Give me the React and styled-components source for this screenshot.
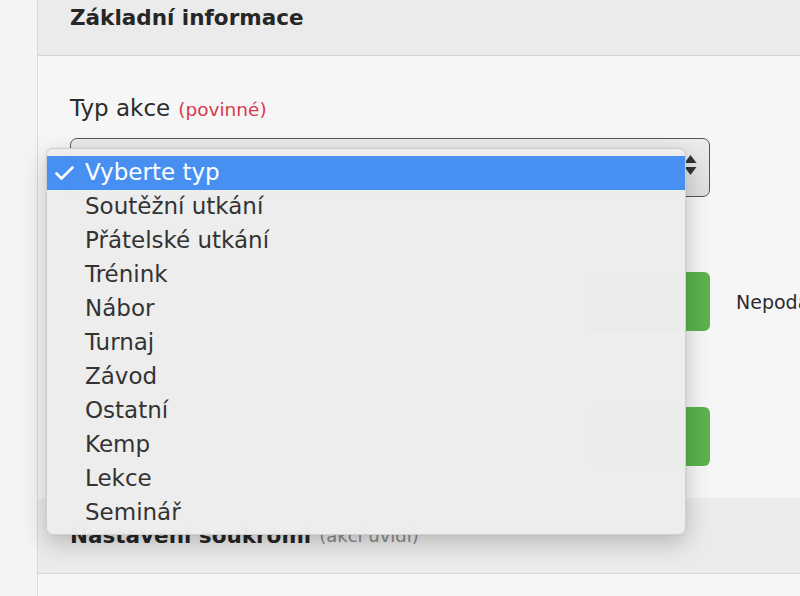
import React from 'react';
import styled, { createGlobalStyle } from 'styled-components';

const GlobalStyle = createGlobalStyle`
  html, body {
    margin: 0;
    padding: 0;
    overflow: hidden;
    background: #f4f4f4;
    font-family: "DejaVu Sans", "Liberation Sans", sans-serif;
  }
`;

const Page = styled.div`
  position: relative;
  display: flex;
  width: 800px;
  height: 596px;
  overflow: hidden;
  background: #f4f4f4;
`;

const Gutter = styled.div`
  width: 37px;
  flex-shrink: 0;
  border-right: 1px solid #d9d9d9;
`;

const Card = styled.div`
  flex: 1;
  display: flex;
  flex-direction: column;
  min-width: 0;
`;

const SectionHeader = styled.div`
  display: flex;
  align-items: ${(p) => (p.$top ? 'flex-start' : 'center')};
  height: ${(p) => p.$height}px;
  padding: ${(p) => (p.$top ? '5px' : '0')} 32px 0;
  box-sizing: border-box;
  background: #ebebeb;
  border-bottom: 1px solid #d5d5d5;
  white-space: nowrap;
`;

const HeaderTitle = styled.span`
  font-size: 21.5px;
  line-height: 26px;
  font-weight: bold;
  color: #262626;
`;

const HeaderNote = styled.span`
  font-size: 18px;
  color: #8a8a8a;
  margin-left: 8px;
`;

const Body = styled.div`
  background: #f6f6f6;
  padding: ${(p) => p.$padding};
  display: flex;
  flex-direction: column;
  flex: ${(p) => (p.$grow ? 1 : 'none')};
`;

const Label = styled.div`
  font-size: 23px;
  line-height: 26px;
  color: #2b2b2b;
  margin-bottom: 15px;
`;

const Required = styled.span`
  font-size: 18.5px;
  color: #d9394f;
  margin-left: 8px;
`;

const SelectBox = styled.div`
  position: relative;
  width: 640px;
  height: 59px;
  box-sizing: border-box;
  border: 1.5px solid #555;
  border-radius: 7px;
  background: linear-gradient(#ececec, #dedede);
`;

const Arrows = styled.svg`
  position: absolute;
  right: 12px;
  top: 16px;
`;

const FieldRow = styled.div`
  display: flex;
  align-items: center;
  gap: 26px;
  margin-top: ${(p) => p.$gap}px;
  white-space: nowrap;
`;

const InputGroup = styled.div`
  display: flex;
  justify-content: flex-end;
  width: 640px;
  height: 59px;
  flex-shrink: 0;
`;

const GreenButton = styled.div`
  width: 120px;
  background: #5cb24c;
  border-radius: 6px;
`;

const RowText = styled.span`
  font-size: 19px;
  color: #2b2b2b;
`;

const Menu = styled.div`
  position: absolute;
  left: 46px;
  top: 148px;
  width: 640px;
  height: 387px;
  box-sizing: border-box;
  padding-top: 7px;
  background: rgba(237, 237, 237, 0.985);
  border: 1px solid rgba(0, 0, 0, 0.12);
  border-radius: 7px;
  box-shadow: 0 8px 24px rgba(0, 0, 0, 0.22), 0 0 2px rgba(0, 0, 0, 0.1);
`;

const MenuItem = styled.div`
  position: relative;
  height: 34px;
  line-height: 33px;
  padding-left: 38px;
  font-size: 23px;
  color: ${(p) => (p.$selected ? '#fff' : '#333')};
  background: ${(p) => (p.$selected ? '#4790f2' : 'transparent')};
`;

const Check = styled.svg`
  position: absolute;
  left: 8px;
  top: 10px;
`;

const options = [
  'Vyberte typ',
  'Soutěžní utkání',
  'Přátelské utkání',
  'Trénink',
  'Nábor',
  'Turnaj',
  'Závod',
  'Ostatní',
  'Kemp',
  'Lekce',
  'Seminář',
];

export default function App() {
  return (
    <>
      <GlobalStyle />
      <Page>
        <Gutter />
        <Card>
          <SectionHeader $height={56} $top>
            <HeaderTitle>Základní informace</HeaderTitle>
          </SectionHeader>
          <Body $padding="39px 32px 32px">
            <Label>
              Typ akce<Required>(povinné)</Required>
            </Label>
            <SelectBox>
              <Arrows width="13" height="20" viewBox="0 0 13 20">
                <path d="M6.5 0 L12.5 8 L0.5 8 Z" fill="#333" />
                <path d="M0.5 12 L12.5 12 L6.5 20 Z" fill="#333" />
              </Arrows>
            </SelectBox>
            <FieldRow $gap={75}>
              <InputGroup>
                <GreenButton />
              </InputGroup>
              <RowText>Nepodařilo</RowText>
            </FieldRow>
            <FieldRow $gap={76}>
              <InputGroup>
                <GreenButton />
              </InputGroup>
            </FieldRow>
          </Body>
          <SectionHeader $height={76}>
            <HeaderTitle>Nastavení soukromí</HeaderTitle>
            <HeaderNote>(akcí uvidí)</HeaderNote>
          </SectionHeader>
          <Body $padding="0" $grow />
        </Card>
        <Menu>
          {options.map((o, i) => (
            <MenuItem key={o} $selected={i === 0}>
              {i === 0 && (
                <Check width="19" height="14" viewBox="0 0 19 14">
                  <path
                    d="M1.5 7.5 L6.5 12.5 L17.5 1.5"
                    fill="none"
                    stroke="#fff"
                    strokeWidth="2.6"
                    strokeLinecap="round"
                    strokeLinejoin="round"
                  />
                </Check>
              )}
              {o}
            </MenuItem>
          ))}
        </Menu>
      </Page>
    </>
  );
}
